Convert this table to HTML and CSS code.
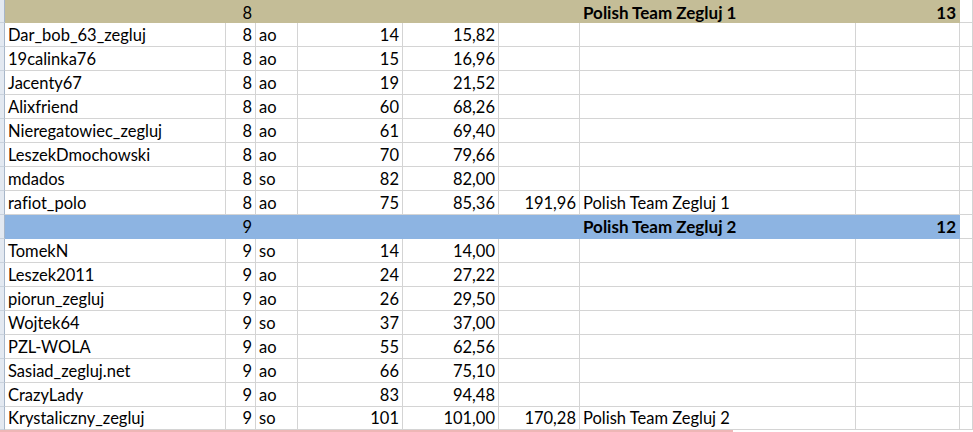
FILE: index.html
```html
<!DOCTYPE html>
<html lang="pl">
<head>
    <meta charset="UTF-8">
    <meta name="viewport" content="width=device-width, initial-scale=1.0">
    <title>Polish Team Zegluj - wyniki</title>
    <link rel="stylesheet" href="styles.css">
</head>
<body>
    <div class="sheet">
        <!-- Team 1 -->
        <div class="row group tan first">
            <div class="stub"></div><div></div><div class="num">8</div><div></div><div></div><div></div><div></div>
            <div class="bold">Polish Team Zegluj 1</div><div class="num bold">13</div><div class="edge"></div>
        </div>
        <div class="row">
            <div class="stub"></div><div>Dar_bob_63_zegluj</div><div class="num">8</div><div>ao</div><div class="num">14</div><div class="num">15,82</div><div></div><div></div><div></div><div></div>
        </div>
        <div class="row">
            <div class="stub"></div><div>19calinka76</div><div class="num">8</div><div>ao</div><div class="num">15</div><div class="num">16,96</div><div></div><div></div><div></div><div></div>
        </div>
        <div class="row">
            <div class="stub"></div><div>Jacenty67</div><div class="num">8</div><div>ao</div><div class="num">19</div><div class="num">21,52</div><div></div><div></div><div></div><div></div>
        </div>
        <div class="row">
            <div class="stub"></div><div>Alixfriend</div><div class="num">8</div><div>ao</div><div class="num">60</div><div class="num">68,26</div><div></div><div></div><div></div><div></div>
        </div>
        <div class="row">
            <div class="stub"></div><div>Nieregatowiec_zegluj</div><div class="num">8</div><div>ao</div><div class="num">61</div><div class="num">69,40</div><div></div><div></div><div></div><div></div>
        </div>
        <div class="row">
            <div class="stub"></div><div>LeszekDmochowski</div><div class="num">8</div><div>ao</div><div class="num">70</div><div class="num">79,66</div><div></div><div></div><div></div><div></div>
        </div>
        <div class="row">
            <div class="stub"></div><div>mdados</div><div class="num">8</div><div>so</div><div class="num">82</div><div class="num">82,00</div><div></div><div></div><div></div><div></div>
        </div>
        <div class="row">
            <div class="stub"></div><div>rafiot_polo</div><div class="num">8</div><div>ao</div><div class="num">75</div><div class="num">85,36</div><div class="num">191,96</div><div>Polish Team Zegluj 1</div><div></div><div></div>
        </div>

        <!-- Team 2 -->
        <div class="row group blue">
            <div class="stub"></div><div></div><div class="num">9</div><div></div><div></div><div></div><div></div>
            <div class="bold">Polish Team Zegluj 2</div><div class="num bold">12</div><div class="edge"></div>
        </div>
        <div class="row">
            <div class="stub"></div><div>TomekN</div><div class="num">9</div><div>so</div><div class="num">14</div><div class="num">14,00</div><div></div><div></div><div></div><div></div>
        </div>
        <div class="row">
            <div class="stub"></div><div>Leszek2011</div><div class="num">9</div><div>ao</div><div class="num">24</div><div class="num">27,22</div><div></div><div></div><div></div><div></div>
        </div>
        <div class="row">
            <div class="stub"></div><div>piorun_zegluj</div><div class="num">9</div><div>ao</div><div class="num">26</div><div class="num">29,50</div><div></div><div></div><div></div><div></div>
        </div>
        <div class="row">
            <div class="stub"></div><div>Wojtek64</div><div class="num">9</div><div>so</div><div class="num">37</div><div class="num">37,00</div><div></div><div></div><div></div><div></div>
        </div>
        <div class="row">
            <div class="stub"></div><div>PZL-WOLA</div><div class="num">9</div><div>ao</div><div class="num">55</div><div class="num">62,56</div><div></div><div></div><div></div><div></div>
        </div>
        <div class="row">
            <div class="stub"></div><div>Sasiad_zegluj.net</div><div class="num">9</div><div>ao</div><div class="num">66</div><div class="num">75,10</div><div></div><div></div><div></div><div></div>
        </div>
        <div class="row">
            <div class="stub"></div><div>CrazyLady</div><div class="num">9</div><div>ao</div><div class="num">83</div><div class="num">94,48</div><div></div><div></div><div></div><div></div>
        </div>
        <div class="row last">
            <div class="stub"></div><div>Krystaliczny_zegluj</div><div class="num">9</div><div>so</div><div class="num">101</div><div class="num">101,00</div><div class="num">170,28</div><div>Polish Team Zegluj 2</div><div></div><div></div>
        </div>
        <div class="page-break"></div>
    </div>
</body>
</html>
```

FILE: styles.css
```css
/* ----- Colors ----- */
:root {
    --grid: #d4d4d4;
    --tan: #c4bd97;
    --blue: #8db4e2;
    --stub: #e3e9f1;
    --break: #eeb6b6;
}

/* ----- Page ----- */
body {
    margin: 0;
    background: #fff;
    color: #000;
    font-family: Lato, "Liberation Sans", sans-serif;
    font-size: 16.5px;
    font-variant-ligatures: none;
    overflow: hidden;
}

/* ----- Sheet rows ----- */
.row {
    display: grid;
    grid-template-columns: 5px 221px 30px 42px 105px 96px 81px 276px 104px 1fr;
    height: 24px;
}

.row > div {
    box-sizing: border-box;
    display: flex;
    align-items: flex-end;
    padding: 0 3px 2px;
    line-height: 18px;
    white-space: nowrap;
    overflow: hidden;
    border-right: 1px solid var(--grid);
    border-bottom: 1px solid var(--grid);
}

.row > .stub {
    padding: 0;
    background: var(--stub);
    border-right-color: #a7b6c9;
    border-bottom-color: #c9d2dd;
}

.num {
    justify-content: flex-end;
}

.bold {
    font-size: 17px;
    font-weight: 700;
}

/* ----- Team header rows ----- */
.row.first {
    height: 23px;
}

.row.first > div {
    padding-bottom: 0;
}

.group.tan > div:not(.stub):not(.edge) {
    background: var(--tan);
    border-color: var(--tan);
}

.group.blue > div:not(.stub):not(.edge) {
    background: var(--blue);
    border-color: var(--blue);
}

/* ----- Page break line ----- */
.row.last {
    height: 23px;
}

.page-break {
    width: 733px;
    height: 2px;
    background: var(--break);
}
```
